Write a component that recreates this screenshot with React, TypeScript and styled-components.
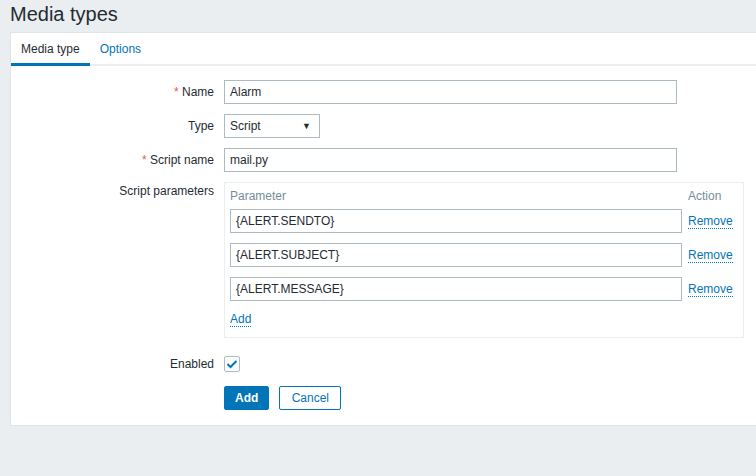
import React from "react";
import styled, { createGlobalStyle } from "styled-components";

const GlobalStyle = createGlobalStyle`
  html, body {
    margin: 0;
    padding: 0;
    background: #ebeef0;
    font-family: "Liberation Sans", Arial, sans-serif;
    font-size: 12px;
    color: #1f2c33;
  }
`;

const Page = styled.div`
  width: 756px;
  height: 476px;
  overflow: hidden;
  padding-left: 10px;
  box-sizing: border-box;
`;

const Title = styled.h1`
  margin: 0;
  height: 32px;
  font-size: 20px;
  font-weight: normal;
  line-height: 28px;
  color: #1f2c33;
`;

const Panel = styled.div`
  background: #fff;
  border: 1px solid #dfe4e7;
  border-right: none;
  margin-right: -20px;
  padding-bottom: 15px;
`;

const TabBar = styled.div`
  display: flex;
  height: 31px;
  border-bottom: 2px solid #ebeef0;
`;

const Tab = styled.div<{ $active?: boolean }>`
  padding: 1px 10px 0;
  line-height: 30px;
  color: ${(p) => (p.$active ? "#1f2c33" : "#0275b8")};
  border-bottom: 3px solid ${(p) => (p.$active ? "#0275b8" : "transparent")};
  margin-bottom: -2px;
`;

const Form = styled.div`
  display: grid;
  grid-template-columns: 203px auto;
  column-gap: 10px;
  row-gap: 10px;
  padding-top: 14px;
  align-items: start;
`;

const Label = styled.div<{ $required?: boolean; $top?: boolean }>`
  text-align: right;
  line-height: ${(p) => (p.$top ? "18px" : "24px")};
  &::before {
    content: ${(p) => (p.$required ? '"* "' : '""')};
    color: #e45959;
  }
`;

const TextInput = styled.div<{ $width: number }>`
  box-sizing: border-box;
  width: ${(p) => p.$width}px;
  height: 24px;
  border: 1px solid #acbbc2;
  padding: 0 5px;
  line-height: 22px;
  background: #fff;
`;

const Select = styled(TextInput)`
  display: flex;
  justify-content: space-between;
  align-items: center;
  padding-right: 8px;
`;

const Arrow = styled.span`
  font-size: 9px;
  color: #1f2c33;
`;

const ParamBox = styled.div`
  box-sizing: border-box;
  width: 520px;
  border: 1px solid #ebeef0;
  padding: 5px 10px 11px 5px;
  margin-bottom: 4px;
`;

const ParamTable = styled.div`
  display: grid;
  grid-template-columns: 452px auto;
  column-gap: 6px;
  row-gap: 10px;
  align-items: center;
`;

const HeadCell = styled.div`
  color: #768d99;
  line-height: 16px;
  margin-bottom: -5px;
`;

const LinkButton = styled.span`
  color: #0275b8;
  border-bottom: 1px dotted #0275b8;
  line-height: 14px;
  justify-self: start;
`;

const AddRow = styled.div`
  padding-top: 11px;
`;

const Check = styled.div`
  box-sizing: border-box;
  width: 16px;
  height: 16px;
  margin-top: 4px;
  border: 1px solid #acbbc2;
  border-radius: 2px;
  display: flex;
  align-items: center;
  justify-content: center;
`;

const Buttons = styled.div`
  display: flex;
  gap: 10px;
`;

const Button = styled.div<{ $primary?: boolean }>`
  box-sizing: border-box;
  height: 24px;
  padding: 0 10px;
  line-height: 22px;
  border-radius: 2px;
  border: 1px solid #0275b8;
  background: ${(p) => (p.$primary ? "#0275b8" : "#fff")};
  color: ${(p) => (p.$primary ? "#fff" : "#0275b8")};
  font-weight: ${(p) => (p.$primary ? "bold" : "normal")};
  min-width: ${(p) => (p.$primary ? "45px" : "62px")};
  text-align: center;
`;

const params = ["{ALERT.SENDTO}", "{ALERT.SUBJECT}", "{ALERT.MESSAGE}"];

export default function App() {
  return (
    <Page>
      <GlobalStyle />
      <Title>Media types</Title>
      <Panel>
        <TabBar>
          <Tab $active>Media type</Tab>
          <Tab>Options</Tab>
        </TabBar>
        <Form>
          <Label $required>Name</Label>
          <TextInput $width={453}>Alarm</TextInput>

          <Label>Type</Label>
          <Select $width={96}>
            Script <Arrow>▼</Arrow>
          </Select>

          <Label $required>Script name</Label>
          <TextInput $width={453}>mail.py</TextInput>

          <Label $top>Script parameters</Label>
          <ParamBox>
            <ParamTable>
              <HeadCell>Parameter</HeadCell>
              <HeadCell>Action</HeadCell>
              {params.map((p) => (
                <React.Fragment key={p}>
                  <TextInput $width={452}>{p}</TextInput>
                  <LinkButton>Remove</LinkButton>
                </React.Fragment>
              ))}
            </ParamTable>
            <AddRow>
              <LinkButton>Add</LinkButton>
            </AddRow>
          </ParamBox>

          <Label>Enabled</Label>
          <Check>
            <svg width="12" height="10" viewBox="0 0 12 10">
              <path d="M1.5 5 L4.5 8 L10.5 2" fill="none" stroke="#0275b8" strokeWidth="2" />
            </svg>
          </Check>

          <div />
          <Buttons>
            <Button $primary>Add</Button>
            <Button>Cancel</Button>
          </Buttons>
        </Form>
      </Panel>
    </Page>
  );
}
